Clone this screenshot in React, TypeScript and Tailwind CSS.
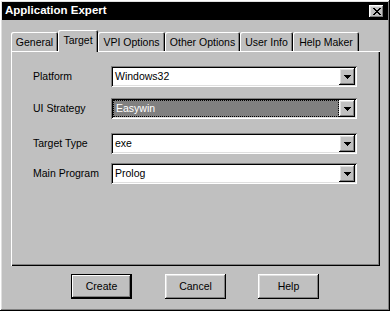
import React from "react";

const raised =
  "shadow-[inset_-1px_-1px_#000,inset_1px_1px_#fff,inset_-2px_-2px_#808080,inset_2px_2px_#dfdfdf]";
const sunken =
  "shadow-[inset_1px_1px_#808080,inset_-1px_-1px_#fff,inset_2px_2px_#000,inset_-2px_-2px_#dfdfdf]";

function Arrow() {
  return (
    <svg width="7" height="4" viewBox="0 0 7 4" shapeRendering="crispEdges">
      <path d="M0 0h7v1H0zM1 1h5v1H1zM2 2h3v1H2zM3 3h1v1H3z" fill="#000" />
    </svg>
  );
}

function CloseX() {
  return (
    <svg width="8" height="7" viewBox="0 0 8 7" shapeRendering="crispEdges">
      <path
        d="M0 0h2v1H0zM6 0h2v1H6zM1 1h2v1H1zM5 1h2v1H5zM2 2h4v1H2zM3 3h2v1H3zM2 4h4v1H2zM1 5h2v1H1zM5 5h2v1H5zM0 6h2v1H0zM6 6h2v1H6z"
        fill="#000"
      />
    </svg>
  );
}

function Combo({ value, selected }: { value: string; selected?: boolean }) {
  return (
    <div className={`w-[246px] h-[21px] bg-white flex p-[2px] ${sunken}`}>
      {selected ? (
        <div className="flex-1 flex items-center bg-[#808080] border border-dotted border-black pl-[2px] text-white">
          {value}
        </div>
      ) : (
        <div className="flex-1 flex items-center pl-[2px] text-black">{value}</div>
      )}
      <div className={`w-[16px] h-[17px] bg-[#c0c0c0] flex items-center justify-center ${raised}`}>
        <Arrow />
      </div>
    </div>
  );
}

function Row({ label, value, selected, mt }: { label: string; value: string; selected?: boolean; mt: string }) {
  return (
    <div className={`flex items-center ${mt}`}>
      <div className="w-[78px] text-black">{label}</div>
      <Combo value={value} selected={selected} />
    </div>
  );
}

const tabs = [
  { name: "General", w: "w-[47px]" },
  { name: "Target", w: "w-[40px]", active: true },
  { name: "VPI Options", w: "w-[67px]" },
  { name: "Other Options", w: "w-[75px]" },
  { name: "User Info", w: "w-[53px]" },
  { name: "Help Maker", w: "w-[66px]" },
];

function Btn({ label, def, ml }: { label: string; def?: boolean; ml?: string }) {
  return (
    <div
      className={`w-[61px] h-[25px] ${ml ?? ""} ${def ? "border border-black" : ""} bg-[#c0c0c0]`}
    >
      <div
        className={`w-full h-full flex items-center justify-center text-black ${
          def
            ? "shadow-[inset_-1px_-1px_#000,inset_1px_1px_#fff,inset_-2px_-2px_#808080]"
            : "shadow-[inset_-1px_-1px_#000,inset_1px_1px_#fff,inset_-2px_-2px_#808080,inset_2px_2px_#dfdfdf]"
        }`}
      >
        {label}
      </div>
    </div>
  );
}

export default function App() {
  return (
    <div
      className={`w-[390px] h-[311px] bg-[#c0c0c0] p-[2px] flex flex-col font-['Liberation_Sans',Arial,sans-serif] text-[10.5px] leading-none ${raised}`}
    >
      <div className="h-[18px] bg-black flex items-center justify-between pl-[3px] pr-[4px]">
        <span className="text-white font-bold text-[11.5px]">Application Expert</span>
        <div className={`w-[15px] h-[13px] bg-[#c0c0c0] flex items-center justify-center ${raised}`}>
          <CloseX />
        </div>
      </div>

      <div className="ml-[9px] mt-[10px] w-[369px]">
        <div className="flex items-end h-[21px] relative z-10">
          {tabs.map((t) =>
            t.active ? (
              <div
                key={t.name}
                className={`${t.w} h-[22px] -mb-[1px] bg-[#c0c0c0] rounded-t-[2px] flex justify-center pt-[5px] text-black shadow-[inset_1px_1px_#fff,inset_-1px_0_#000,inset_-2px_0_#808080]`}
              >
                {t.name}
              </div>
            ) : (
              <div
                key={t.name}
                className={`${t.w} h-[19px] bg-[#c0c0c0] rounded-t-[2px] flex justify-center pt-[5px] text-black shadow-[inset_1px_1px_#fff,inset_-1px_0_#000,inset_-2px_0_#808080]`}
              >
                {t.name}
              </div>
            )
          )}
        </div>
        <div className="h-[215px] bg-[#c0c0c0] pl-[22px] pt-[15px] shadow-[inset_1px_1px_#fff,inset_-1px_-1px_#000,inset_-2px_-2px_#808080]">
          <Row label="Platform" value="Windows32" mt="mt-0" />
          <Row label="UI Strategy" value="Easywin" selected mt="mt-[11px]" />
          <Row label="Target Type" value="exe" mt="mt-[14px]" />
          <Row label="Main Program" value="Prolog" mt="mt-[9px]" />
        </div>
      </div>

      <div className="flex mt-[8px] pl-[69px]">
        <Btn label="Create" def />
        <Btn label="Cancel" ml="ml-[33px]" />
        <Btn label="Help" ml="ml-[32px]" />
      </div>
    </div>
  );
}
